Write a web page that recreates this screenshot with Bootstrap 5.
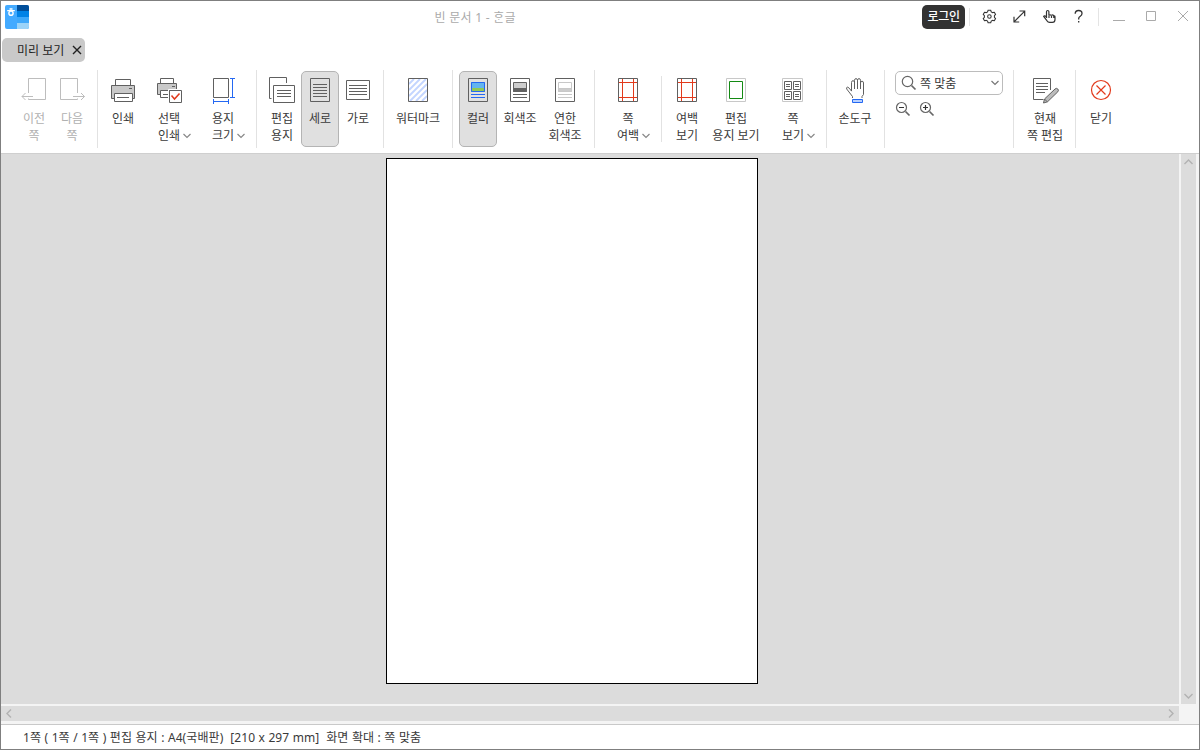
<!DOCTYPE html>
<html lang="ko">
<head>
<meta charset="utf-8">
<title>빈 문서 1 - 한글</title>
<meta name="viewport" content="width=device-width, initial-scale=1">
<link href="https://cdn.jsdelivr.net/npm/bootstrap@5.3.0/dist/css/bootstrap.min.css" rel="stylesheet">
<style>
body{font-family:"Noto Sans","Noto Sans CJK KR",sans-serif;font-size:12px;line-height:17px;color:#3a3a3a;background:#fff}
svg{display:block;fill:none;flex:none}
.app-window{width:1200px;height:750px;border:1px solid #7f7f7f}
.title-bar{height:36px;padding-left:4px}
.doc-title{width:200px;margin-left:346px;color:#aaa;padding-top:8px;letter-spacing:.25px}
.login-btn{width:43px;height:24px;margin:4px 2px 0 348px;padding:0;border:0;border-radius:5px;background:#323232;color:#fff;font-size:12px;font-weight:500;line-height:24px;letter-spacing:-.2px}
.tab-strip{height:29px;padding:1px 0 0 1px}
.doc-tab{width:83px;height:24px;border-radius:5px;background:#c9c9c9;padding-left:15px;color:#222}
.doc-tab svg{margin-left:8px}
.ribbon{height:87px;padding-top:4px}
.tool-group{height:78px;padding:1px 6px 0;border-left:1px solid #e2e2e2;align-items:flex-start}
.tool-group.first{padding-left:14px;border:0;width:96px}
.tool-group.inner{border:0;position:relative;padding-left:7px}
.tool-group.inner::before{content:"";position:absolute;left:0;top:6px;width:1px;height:66px;background:#e2e2e2}
.tool-group.wide-end{padding-right:7px}
.tool-group.edit-end{padding-right:5px}
.tool-group.zoom-tools{padding:1px 10px 0}
.tool{width:38px;height:76px;padding:2px 0 0;border:1px solid transparent;border-radius:5px;background:none;color:#3a3a3a;font-size:12px;line-height:17px;white-space:nowrap;display:flex;flex-direction:column;align-items:center}
.tool>svg{width:32px;height:32px;margin-bottom:4px;stroke:#606060}
.tool>span{display:flex;justify-content:center;white-space:pre}
.tool.active{background:#e0e0e0;border-color:#b4b4b4}
.tool.dim{color:#b0b0b0}.tool.dim>svg{stroke:#bdbdbd}
.t44{width:44px}.t46{width:46px}.t50{width:50px}.t54{width:54px}.t56{width:56px}.t60{width:60px}
.drop-mark{width:8px;height:8px;margin:5px -11px 0 3px;stroke:#888;stroke-width:1.2}
.zoom-box{width:108px;height:24px;border:1px solid #bcbcbc;border-radius:5px;padding:0 3px 0 5px}
.zoom-box span{margin:1px 0 0 3px}
.zoom-pair{margin-top:6px}
.workspace{height:571px;border-top:1px solid #cfcfcf;background:#f4f4f4;display:grid;grid-template:550px 15px/1178px 15px;gap:2px}
.canvas-area,.scroll-track{background:#dcdcdc}
.scroll-track svg{stroke:#b2b2b2;stroke-width:1.4}
.canvas-area{padding:4px 0 0 385px}
.paper-sheet{width:372px;height:526px;border:1px solid #000;background:#fff}
.status-bar{height:25px;border-top:1px solid #c9c9c9;padding-left:22px;white-space:pre;word-spacing:.25px;letter-spacing:.08px}
</style>
</head>
<body class="overflow-hidden">
<main class="app-window d-flex flex-column">
<header class="title-bar d-flex align-items-start">
  <svg class="mt-1" width="25" height="24" viewBox="5 5 25 24"><rect x="5" y="5" width="24" height="24" rx="2" fill="#43aaff"/><path fill="#004e9a" d="M17 5h10q2 0 2 2v4H17z"/><path fill="#0082e6" d="M17 11h12v6H17z"/><path fill="#3ea8fa" d="M17 17h12v6H17z"/><path fill="#9bd3f8" d="M17 23h12v4q0 2-2 2H17z"/><path stroke="#fff" stroke-width="1.3" d="M9.5 9h3M7.2 10.700h7.600"/><circle cx="11" cy="13.200" r="2.100" stroke="#fff" stroke-width="1.400"/></svg>
  <div class="doc-title text-center">빈 문서 1 - ᄒᆞᆫ글</div>
  <button class="login-btn">로그인</button>
  <svg width="232" height="32" viewBox="967 1 232 32" stroke="#333" stroke-width="1.2">
    <path stroke="#e4e4e4" stroke-width="1" d="M969.5 8v18M1098.5 8v18"/>
    <g transform="translate(989.400 16.500) scale(.88) translate(-989.400 -16.500)"><path d="M987.9 10h3l.6 1.800 1.600.9 1.900-.4 1.400 2.500-1.300 1.400v1.800l1.300 1.400-1.400 2.500-1.900-.4-1.600.9-.6 1.800h-3l-.6-1.800-1.600-.9-1.900.4-1.400-2.500 1.300-1.400v-1.800l-1.300-1.400 1.400-2.500 1.900.4 1.600-.9z" transform="translate(0 -.6)"/><circle cx="989.400" cy="16.500" r="2"/></g>
    <path d="M1014.300 21.700l10.200-10.400M1019.500 11h5.200v5.200M1014 16.800v5.200h5.200"/>
    <path d="M1046.500 18v-6.200q0-1.300 1.200-1.300t1.200 1.300v4q0-1 1.200-1t1.300 1q0-.9 1.100-.9t1.200 1q1.300-.4 1.300 1v2.500q0 2.900-2.700 2.900h-2.600q-1.800 0-2.800-1.600l-3.200-4.300q.8-1.400 2.800.7M1049 16v2M1051.500 16v2M1053.800 16.500v1.500"/>
    <path stroke-width="1.300" d="M1075.200 13.700q0-3.200 3.400-3.200t3.400 3q0 1.700-1.700 2.700-1.600.9-1.600 2.300v.9M1078.700 21v1.600"/>
    <g stroke="#aaa" stroke-width="1"><path d="M1113 20.500h12M1178 11l10 10M1188 11l-10 10"/><path d="M1146.500 11.500h9v9h-9z"/></g>
  </svg>
</header>
<nav class="tab-strip"><div class="doc-tab d-flex align-items-center"><span>미리 보기</span><svg width="10" height="10" stroke="#222" stroke-width="1.400"><path d="M1 1l8 8M9 1L1 9"/></svg></div></nav>
<section class="ribbon d-flex">
  <div class="tool-group first d-flex">
    <button class="tool dim"><svg viewBox="18 74 32 32"><path d="M28.500 93V78.500h17v21h-17v-1M33 96.500H22M25.500 93L22 96.500l3.500 3.500"/></svg><span>이전</span><span>쪽</span></button>
    <button class="tool dim"><svg viewBox="56 74 32 32"><path d="M77.500 93V78.500h-17v21h17v-1M73 96.500h11.500M81 93l3.500 3.500L81 100"/></svg><span>다음</span><span>쪽</span></button>
  </div>
  <div class="tool-group d-flex">
    <button class="tool"><svg viewBox="107 74 32 32"><path fill="#fff" d="M115.500 86v-6.500h15V86"/><path fill="#c9c9c9" d="M111.500 85.500h23v13h-23z"/><path fill="#fff" d="M114.500 93.500h18v8h-18z"/><path d="M117 97.500h12M129 88.500h3"/></svg><span>인쇄</span></button>
    <button class="tool t54"><svg viewBox="153 74 32 32"><path fill="#fff" d="M160.500 84v-5.500h13V84"/><path fill="#c9c9c9" d="M157.500 83.500h19v11h-19z"/><path fill="#fff" d="M160.500 90.500h13v7h-13z"/><path d="M163 94.500h6M172 86.500h3"/><path stroke="#fff" d="M168.500 103v-13.500H183"/><path fill="#fff" d="M169.500 90.500h12v12h-12z"/><path stroke="#e23a1c" stroke-width="1.500" d="M171.500 95.500l3 3.500 5-5.500"/></svg><span>선택</span><span>인쇄<svg class="drop-mark"><path d="M.5 2L4 5.500 7.500 2"/></svg></span></button>
    <button class="tool t54"><svg viewBox="207 74 32 32"><path d="M213.500 78.500h15v19h-15z"/><path stroke="#2468f2" d="M232.500 78.500v19M230 78.500h5M230 97.500h5M213.500 101.500h15M213.500 99v5M228.500 99v5"/></svg><span>용지</span><span>크기<svg class="drop-mark"><path d="M.5 2L4 5.500 7.500 2"/></svg></span></button>
  </div>
  <div class="tool-group d-flex">
    <button class="tool"><svg viewBox="266 74 32 32"><path d="M286.500 83v-5.500h-17v21h2M273.500 85.500h21v17h-21zM277 90.500h14M277 93.500h14M277 96.500h14"/></svg><span>편집</span><span>용지</span></button>
    <button class="tool active"><svg viewBox="304 74 32 32"><path d="M310.500 78.500h19v23h-19zM313 84.500h14M313 87.500h14M313 90.500h14M313 93.500h14M313 96.500h14"/></svg><span>세로</span></button>
    <button class="tool"><svg viewBox="342 74 32 32"><path d="M346.500 80.500h23v19h-23zM349 85.500h18M349 88.500h18M349 91.500h18M349 94.500h18"/></svg><span>가로</span></button>
  </div>
  <div class="tool-group d-flex">
    <button class="tool t56"><svg viewBox="402 74 32 32"><path stroke="#c3d5ff" stroke-width="1.800" d="M409 84l5-5M409 90l11-11M409 96l17-17M410 101l17-17M416 101l11-11M422 101l5-5"/><path d="M408.500 78.500h19v23h-19z"/></svg><span>워터마크</span></button>
  </div>
  <div class="tool-group wide-end d-flex">
    <button class="tool active"><svg viewBox="462 74 32 32"><path d="M468.500 78.500h19v23h-19z"/><path fill="#63b4ef" stroke="none" d="M471 82h14v10h-14z"/><path fill="#91c954" stroke="none" d="M471 88h14v4h-14z"/><path stroke="#2468f2" d="M471.500 82.500h13v9h-13zM471 94.500h14M471 97.500h14"/></svg><span>컬러</span></button>
    <button class="tool t46"><svg viewBox="504 74 32 32"><path d="M510.500 78.500h19v23h-19z"/><path fill="#ccc" d="M513.500 82.500h13v9h-13z"/><path fill="#606060" d="M513.500 88.500h13v3h-13zM513 94.500h14M513 97.500h14"/></svg><span>회색조</span></button>
    <button class="tool t44"><svg viewBox="549 74 32 32"><path d="M555.500 78.500h19v23h-19z"/><g stroke="#c8c8c8"><path d="M558.500 82.500h13v9h-13z"/><path fill="#ccc" d="M558.500 88.500h13v3h-13zM558 94.500h14M558 97.500h14"/></g></svg><span>연한</span><span>회색조</span></button>
  </div>
  <div class="tool-group d-flex">
    <button class="tool t54"><svg viewBox="612 74 32 32"><path d="M618.500 78.500h19v23h-19z"/><path stroke="#e23a1c" d="M622.500 79v22M633.500 79v22M619 82.500h18M619 97.500h18"/></svg><span>쪽</span><span>여백<svg class="drop-mark"><path d="M.5 2L4 5.500 7.500 2"/></svg></span></button>
  </div>
  <div class="tool-group inner d-flex">
    <button class="tool"><svg viewBox="671 74 32 32"><path d="M677.500 78.500h19v23h-19z"/><path stroke="#e23a1c" d="M681.500 79v22M692.500 79v22M678 82.500h18M678 97.500h18"/></svg><span>여백</span><span>보기</span></button>
    <button class="tool t60"><svg viewBox="720 74 32 32"><path stroke="#c8c8c8" d="M726.500 78.500h19v23h-19z"/><path stroke="#138a13" d="M729.500 81.500h13v17h-13z"/></svg><span>편집</span><span>용지 보기</span></button>
    <button class="tool t54"><svg viewBox="777 74 32 32"><path stroke="#c8c8c8" d="M782.500 78.500h20v23h-20z"/><path d="M784.500 81.500h7v8h-7zM793.500 81.500h7v8h-7zM784.500 91.500h7v8h-7zM793.500 91.500h7v8h-7zM786 84.500h4M786 86.500h4M795 84.500h4M795 86.500h4M786 94.500h4M786 96.500h4M795 94.500h4M795 96.500h4"/></svg><span>쪽</span><span>보기<svg class="drop-mark"><path d="M.5 2L4 5.500 7.500 2"/></svg></span></button>
  </div>
  <div class="tool-group wide-end d-flex">
    <button class="tool t44"><svg viewBox="839 74 32 32"><path d="M852.500 98v-1.500l-5.800-7.500q-.6-1.800 1-1.900 1 0 3.800 4V82.500q0-1.800 1.500-1.800t1.500 1.800V89v-8.500q0-1.900 1.500-1.900t1.500 1.900V89v-8.500q0-1.900 1.500-1.900t1.500 1.900V89v-6q0-1.800 1.500-1.800t1.500 1.800v11.500l-1.500 2V98"/><path fill="#b7d0ff" stroke="#2468f2" d="M852.500 99.500h10v3h-10z"/></svg><span>손도구</span></button>
  </div>
  <div class="tool-group d-flex flex-column zoom-tools">
    <div class="zoom-box d-flex align-items-center"><svg width="16" height="16" stroke="#666" stroke-width="1.200"><circle cx="6.500" cy="6.500" r="5.200"/><path stroke-width="1.700" d="M10.500 10.500l4 4"/></svg><span>쪽 맞춤</span><svg class="ms-auto" width="8" height="8" stroke="#777" stroke-width="1.200"><path d="M.5 2L4 5.500 7.500 2"/></svg></div>
    <svg width="40" height="16" viewBox="895 101 40 16" class="zoom-pair" stroke="#666" stroke-width="1.200"><circle cx="901.500" cy="107.500" r="5"/><circle cx="925.500" cy="107.500" r="5"/><path stroke-width="1.700" d="M905.500 111.500l4 4M929.500 111.500l4 4"/><path stroke="#333" d="M899 107.500h5M923 107.500h5M925.500 105v5"/></svg>
  </div>
  <div class="tool-group edit-end d-flex">
    <button class="tool t50"><svg viewBox="1029 74 32 32"><path d="M1050.500 90V78.500h-17v21h10M1036 83.500h12M1036 86.500h12M1036 89.500h12M1036 92.500h9"/><path fill="#bbb" d="M1043.500 103l1-4 10.500-10q1.500-1.300 2.800 0t0 2.800l-10.300 10z"/><path d="M1044.500 99l2.800 2.800"/></svg><span>현재</span><span>쪽 편집</span></button>
  </div>
  <div class="tool-group d-flex">
    <button class="tool"><svg viewBox="1085 74 32 32"><circle cx="1101" cy="90" r="9.500" stroke="#e23a1c" stroke-width="1.200"/><path stroke="#e23a1c" stroke-width="1.200" d="M1096.500 85.500l9 9M1105.500 85.500l-9 9"/></svg><span>닫기</span></button>
  </div>
</section>
<section class="workspace">
  <div class="canvas-area"><div class="paper-sheet"></div></div>
  <div class="scroll-track d-flex flex-column justify-content-between align-items-center py-1"><svg width="9" height="8"><path d="M.5 6l4-4 4 4"/></svg><svg width="9" height="8"><path d="M.5 2l4 4 4-4"/></svg></div>
  <div class="scroll-track d-flex justify-content-between align-items-center px-1"><svg width="8" height="9"><path d="M6 .5l-4 4 4 4"/></svg><svg width="8" height="9"><path d="M2 .5l4 4-4 4"/></svg></div>
</section>
<footer class="status-bar d-flex align-items-center">1쪽 ( 1쪽 / 1쪽 ) 편집 용지 : A4(국배판)  [210 x 297 mm]  화면 확대 : 쪽 맞춤</footer>
</main>
<script src="https://cdn.jsdelivr.net/npm/bootstrap@5.3.0/dist/js/bootstrap.bundle.min.js"></script>
</body>
</html>
